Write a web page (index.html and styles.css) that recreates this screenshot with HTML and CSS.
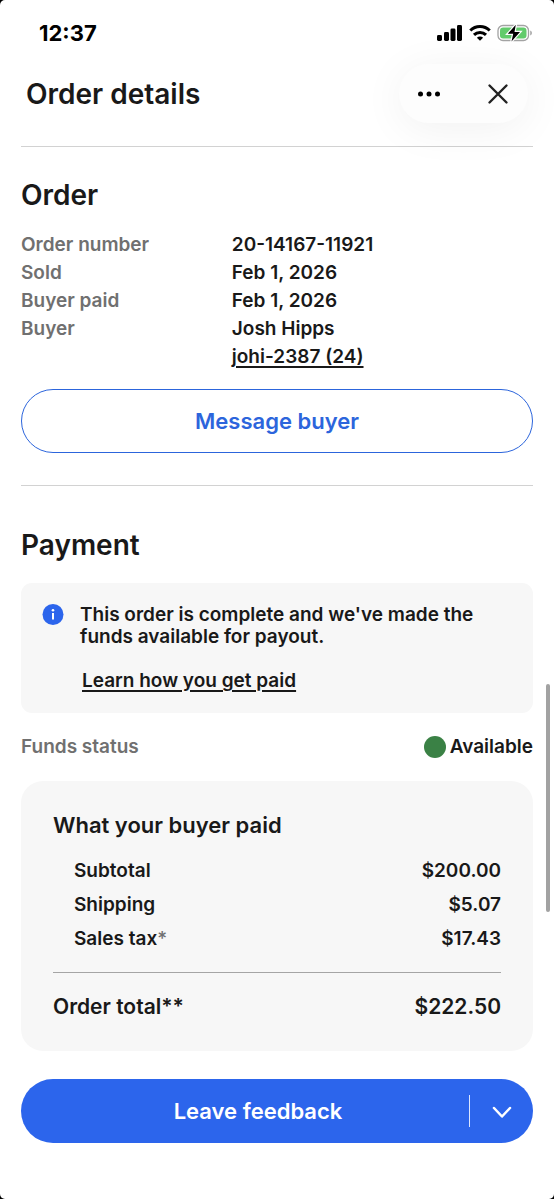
FILE: index.html
```html
<!DOCTYPE html>
<html lang="en">
<head>
<meta charset="utf-8">
<meta name="viewport" content="width=device-width, initial-scale=1">
<title>Order details</title>
<link rel="stylesheet" href="styles.css">
</head>
<body>
<div class="screen">
  <div class="status-bar">
    <time class="clock">12:37</time>
    <div class="status-icons">
      <svg width="26" height="18" viewBox="0 0 26 18" aria-hidden="true"><rect x="0" y="11" width="5" height="6" rx="1.4"/><rect x="7" y="8" width="5" height="9" rx="1.4"/><rect x="13.500" y="4.500" width="5" height="12.500" rx="1.400"/><rect x="20" y="1" width="5" height="16" rx="1.400"/></svg>
      <svg width="22" height="18" viewBox="0 0 22 18" aria-hidden="true"><g fill="none" stroke="#000" stroke-width="3"><path d="M1.300 6.500a13.800 13.800 0 0 1 19.400 0"/><path d="M5 10.900a8.500 8.500 0 0 1 12 0"/></g><path d="M11 16.800 7.900 13.700a4.400 4.400 0 0 1 6.200 0z"/></svg>
      <svg width="36" height="18" viewBox="0 0 36 18" aria-hidden="true"><rect x="1" y="1.500" width="30.500" height="15" rx="5" fill="#fff" stroke="#a3a3a3" stroke-width="1.300"/><rect x="3" y="3.500" width="26.500" height="11" rx="3.200" fill="#62cb6b"/><path d="M33.300 6.500c2 .8 2 4.200 0 5z" fill="#999"/><path d="M18.800.8 10.800 9.700h5.400l-1.700 7.700 8.500-9.400h-5.500z" stroke="#fff" stroke-width="2.400" paint-order="stroke"/></svg>
    </div>
  </div>
  <header class="page-header">
    <h1 class="page-title">Order details</h1>
    <div class="header-actions">
      <button class="icon-button" type="button" aria-label="More options"><svg width="24" height="24" viewBox="0 0 24 24"><circle cx="3.500" cy="12" r="2.500"/><circle cx="12" cy="12" r="2.500"/><circle cx="20.500" cy="12" r="2.500"/></svg></button>
      <button class="icon-button" type="button" aria-label="Close"><svg width="24" height="24" viewBox="0 0 24 24"><path d="M3.500 3.500l17 17M20.500 3.500l-17 17" fill="none" stroke="#222" stroke-width="2.400" stroke-linecap="round"/></svg></button>
    </div>
  </header>
  <main>
    <section class="section">
      <h2 class="section-title">Order</h2>
      <dl class="facts">
        <dt>Order number</dt><dd>20-14167-11921</dd>
        <dt>Sold</dt><dd>Feb 1, 2026</dd>
        <dt>Buyer paid</dt><dd>Feb 1, 2026</dd>
        <dt>Buyer</dt><dd>Josh Hipps</dd>
        <dd class="buyer-id"><a class="link" href="#buyer">johi-2387 (24)</a></dd>
      </dl>
      <button class="button outline" type="button">Message buyer</button>
    </section>
    <section class="section">
      <h2 class="section-title">Payment</h2>
      <div class="notice">
        <svg class="notice-icon" width="22" height="22" viewBox="0 0 22 22" aria-hidden="true"><circle cx="11" cy="10.500" r="10.500" fill="#2c65ec"/><circle cx="11" cy="6.300" r="1.300" fill="#fff"/><path d="M11 9v6.500" stroke="#fff" stroke-width="2"/></svg>
        <div>
          <p class="notice-text">This order is complete and we've made the funds available for payout.</p>
          <a class="link notice-link" href="#payouts">Learn how you get paid</a>
        </div>
      </div>
      <div class="funds">
        <span class="muted">Funds status</span>
        <span class="funds-value"><i class="dot"></i>Available</span>
      </div>
      <div class="card">
        <h3 class="card-title">What your buyer paid</h3>
        <table class="amounts">
          <tbody>
            <tr><th scope="row">Subtotal</th><td>$200.00</td></tr>
            <tr><th scope="row">Shipping</th><td>$5.07</td></tr>
            <tr><th scope="row">Sales tax<span class="muted footnote">*</span></th><td>$17.43</td></tr>
          </tbody>
          <tfoot>
            <tr><th scope="row">Order total**</th><td>$222.50</td></tr>
          </tfoot>
        </table>
      </div>
    </section>
  </main>
  <footer class="actions">
    <button class="button feedback" type="button">Leave feedback</button>
    <button class="more" type="button" aria-label="More actions"><svg width="24" height="24" viewBox="0 0 24 24"><path d="M4 9l8 8.500L20 9" fill="none" stroke="#fff" stroke-width="2.500" stroke-linecap="round" stroke-linejoin="round"/></svg></button>
  </footer>
  <div class="scroll-thumb"></div>
</div>
</body>
</html>
```
FILE: styles.css
```css
* {
  box-sizing: border-box;
}

html {
  background: #000;
}

body {
  margin: 0;
  color: #191919;
  font: 600 19px/28px Inter, Roboto, "Liberation Sans", sans-serif;
}

h1, h2, h3, p, dl, dd {
  margin: 0;
}

button {
  font: inherit;
  cursor: pointer;
}

.screen {
  position: relative;
  min-height: 100vh;
  padding: 0 21px 24px;
  overflow: hidden;
  background: #fff;
  border-radius: 5px;
}

.status-bar {
  display: flex;
  align-items: center;
  justify-content: space-between;
  height: 64px;
  padding: 2px 0 0 18px;
}

.clock {
  color: #000;
  font-size: 22px;
  font-weight: 700;
}

.status-icons {
  display: flex;
  align-items: center;
  gap: 6px;
}

.page-header {
  display: flex;
  align-items: center;
  justify-content: space-between;
  padding: 0 5px 23px;
  border-bottom: 1px solid #d2d2d2;
}

.page-title,
.section-title {
  font-size: 28px;
  font-weight: 600;
  line-height: 36px;
}

.header-actions {
  display: flex;
  align-items: center;
  justify-content: space-between;
  width: 129px;
  height: 59px;
  padding: 0 12px;
  background: #fdfdfd;
  border-radius: 30px;
  box-shadow: 0 6px 44px rgba(0, 0, 0, 0.06);
}

.icon-button {
  display: grid;
  place-items: center;
  width: 36px;
  height: 44px;
  padding: 0;
  color: inherit;
  background: none;
  border: 0;
}

.section {
  padding: 30px 0 32px;
  border-bottom: 1px solid #d2d2d2;
}

.section + .section {
  padding: 41px 0 0;
  border: 0;
}

.facts {
  display: grid;
  grid-template-columns: 7fr 10fr;
  margin: 18px 0;
}

.facts dt,
.muted {
  color: #707070;
}

.footnote {
  font-weight: 500;
}

.buyer-id {
  grid-column: 2;
}

.link {
  color: inherit;
  text-decoration: underline;
  text-decoration-thickness: 2px;
  text-underline-offset: 3px;
}

.button {
  height: 64px;
  padding: 0;
  border: 0;
  font-size: 22px;
}

.outline {
  display: block;
  width: 100%;
  color: #2c65dc;
  background: #fff;
  border: 1px solid #2c65dc;
  border-radius: 32px;
}

.notice {
  display: flex;
  gap: 16px;
  margin-top: 20px;
  padding: 21px 21px 18px;
  background: #f7f7f7;
  border-radius: 11px;
}

.notice-icon {
  flex: none;
}

.notice-text {
  line-height: 22px;
}

.notice-link {
  display: inline-block;
  margin: 19px 0 0 2px;
}

.funds {
  display: flex;
  justify-content: space-between;
  margin: 20px 0;
}

.funds-value {
  display: flex;
  align-items: center;
  gap: 4px;
}

.dot {
  width: 22px;
  height: 22px;
  background: #3a8145;
  border-radius: 50%;
}

.card {
  padding: 30px 32px;
  background: #f7f7f7;
  border-radius: 22px;
}

.card-title {
  font-size: 22px;
  font-weight: 600;
  line-height: 28px;
}

.amounts {
  width: 100%;
  margin-top: 15px;
  border-collapse: collapse;
}

.amounts th {
  padding: 0;
  font-weight: 600;
  text-align: left;
}

.amounts td {
  padding: 0;
  text-align: right;
}

.amounts tbody th {
  padding-left: 21px;
}

.amounts tbody tr {
  height: 34px;
}

.amounts tbody::after {
  content: "";
  display: block;
  height: 16px;
}

.amounts tfoot tr {
  border-top: 1px solid #a5a5a5;
  font-size: 21px;
}

.amounts tfoot th,
.amounts tfoot td {
  padding-top: 20px;
}

.actions {
  display: flex;
  align-items: center;
  margin-top: 28px;
  background: #2c65ec;
  border-radius: 32px;
}

.feedback {
  flex: 1;
  padding-left: 26px;
  color: #fff;
  background: none;
}

.more {
  display: grid;
  place-items: center;
  width: 64px;
  height: 32px;
  padding: 0;
  background: none;
  border: 0;
  border-left: 1px solid #dce6ff;
}

.scroll-thumb {
  position: absolute;
  top: 684px;
  right: 4px;
  width: 4px;
  height: 228px;
  background: #a2a2a2;
  border-radius: 2px;
}
```
